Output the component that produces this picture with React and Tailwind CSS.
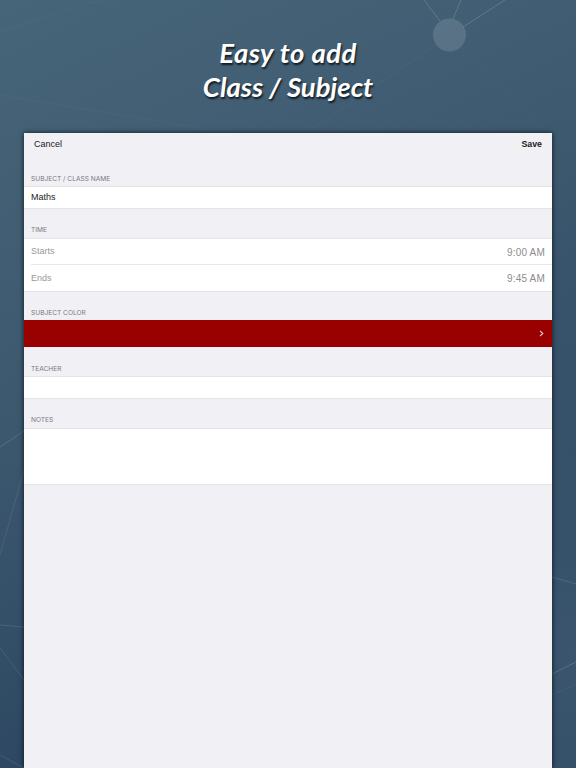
const Header = ({ children, h }) => (
  <div className={`flex items-end pl-[7px] pb-[2.5px] font-['Inter',sans-serif] text-[6.6px] leading-[9px] text-[#78787d] ${h}`}>{children}</div>
);

const lines = [
  { d: [440, 21, 424, 0], o: 0.16 },
  { d: [453, 19, 461, 0], o: 0.16 },
  { d: [463, 27, 505, 0], o: 0.16 },
  { d: [436, 45, 310, 130], o: 0.03 },
  { d: [461, 47, 545, 130], o: 0.03 },
  { d: [0, 32, 100, 0], o: 0.03 },
  { d: [0, 95, 200, 128], o: 0.03 },
  { d: [0, 447, 24, 431], o: 0.13 },
  { d: [0, 555, 24, 470], o: 0.09 },
  { d: [0, 625, 24, 627], o: 0.12 },
  { d: [0, 648, 24, 680], o: 0.1 },
  { d: [0, 755, 24, 768], o: 0.1 },
  { d: [552, 577, 576, 584], o: 0.13 },
  { d: [552, 674, 576, 662], o: 0.16 },
  { d: [552, 695, 576, 684], o: 0.05 },
];

function Background() {
  return (
    <svg className="absolute inset-0" width="576" height="768" viewBox="0 0 576 768">
      <g stroke="#ffffff" strokeWidth="1" fill="none">
        {lines.map((l, i) => (
          <line key={i} x1={l.d[0]} y1={l.d[1]} x2={l.d[2]} y2={l.d[3]} strokeOpacity={l.o} />
        ))}
      </g>
      <circle cx="449.5" cy="35" r="16.5" fill="#ffffff" fillOpacity="0.13" />
    </svg>
  );
}

export default function App() {
  return (
    <div className="relative h-[768px] w-[576px] overflow-hidden bg-[radial-gradient(circle_at_100%_85%,rgba(70,98,120,0.55)_0%,rgba(70,98,120,0)_45%),linear-gradient(155deg,#476579_0%,#3c586f_42%,#2b4560_80%)] font-['Liberation_Sans',sans-serif]">
      <Background />
      <div className="relative flex h-[133px] flex-col items-center pt-[36px] font-['Lato',sans-serif] text-[27.5px] font-bold italic leading-[34px] text-white [text-shadow:1px_2px_2px_rgba(0,0,0,0.75)]">
        <div className="tracking-[0.45px]">Easy to add</div>
        <div>Class / Subject</div>
      </div>
      <div className="relative ml-[24px] h-[635px] w-[528px] bg-[#f0f0f5] shadow-[0_0_5px_rgba(0,0,0,0.75)]">
        <div className="flex h-[22px] items-center justify-between px-[10px] pt-[1px] text-[9px] text-[#222]">
          <span>Cancel</span>
          <span className="text-[8.8px] font-bold">Save</span>
        </div>
        <Header h="h-[31px]">SUBJECT / CLASS NAME</Header>
        <div className="flex h-[22.5px] items-center border-y border-[#e4e4e8] bg-white pl-[7px] text-[9px] text-[#222]">Maths</div>
        <Header h="h-[29px]">TIME</Header>
        <div className="border-y border-[#e4e4e8] bg-white pl-[7px] text-[9px] text-[#98989c]">
          <div className="flex h-[26px] items-center justify-between border-b border-[#e8e8ec] pr-[7px] pt-[2px]">
            <span>Starts</span>
            <span className="text-[10px] tracking-[0.2px] text-[#8c8c8c]">9:00 AM</span>
          </div>
          <div className="flex h-[26.5px] items-center justify-between pr-[7px] pt-[2px]">
            <span>Ends</span>
            <span className="text-[10px] tracking-[0.2px] text-[#8c8c8c]">9:45 AM</span>
          </div>
        </div>
        <Header h="h-[28px]">SUBJECT COLOR</Header>
        <div className="flex h-[27px] items-center justify-end bg-[#990000] pr-[8px]">
          <svg width="5" height="7" viewBox="0 0 5 7" fill="none" stroke="#f4d0d0" strokeWidth="1.1">
            <path d="M1 0.8 L3.8 3.5 L1 6.2" />
          </svg>
        </div>
        <Header h="h-[29px]">TEACHER</Header>
        <div className="h-[22.5px] border-y border-[#e4e4e8] bg-white" />
        <Header h="h-[29px]">NOTES</Header>
        <div className="h-[57px] border-y border-[#e4e4e8] bg-white" />
      </div>
    </div>
  );
}
